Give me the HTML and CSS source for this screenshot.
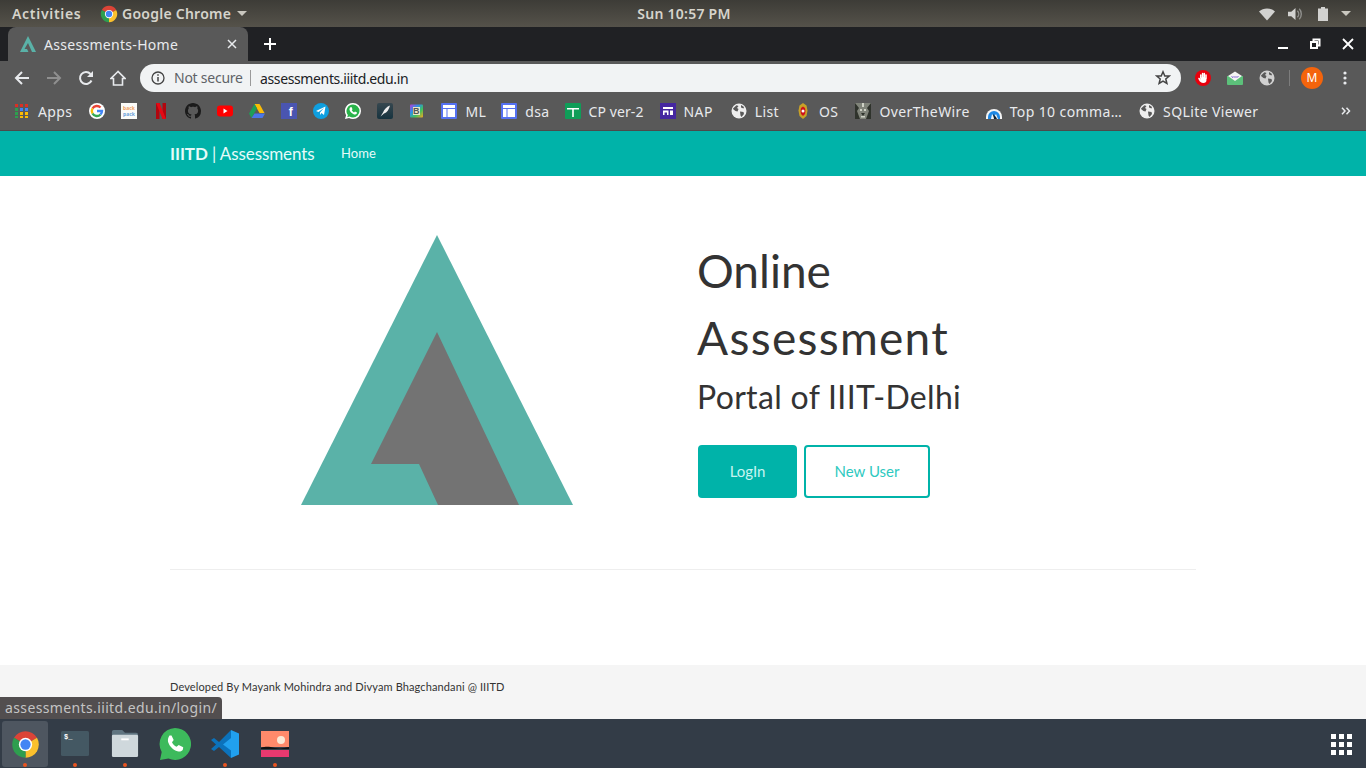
FILE: index.html
```html
<!DOCTYPE html>
<html lang="en">
<head>
    <meta charset="UTF-8">
    <meta name="viewport" content="width=device-width, initial-scale=1.0">
    <title>Assessments-Home</title>
    <link rel="stylesheet" href="styles.css">
</head>
<body>
    <svg class="defs" width="0" height="0" aria-hidden="true">
        <symbol id="chrome" viewBox="0 0 48 48">
            <path fill="#db4437" d="M24 24 43.05 13A22 22 0 0 0 4.95 13z"/>
            <path fill="#fbc02d" d="M24 24 43.05 13A22 22 0 0 1 24 46z"/>
            <path fill="#2e9e4f" d="M24 24 24 46A22 22 0 0 1 4.95 13z"/>
            <circle cx="24" cy="24" r="11" fill="#fff"/>
            <circle cx="24" cy="24" r="8.5" fill="#4285f4"/>
        </symbol>
        <symbol id="globe" viewBox="0 0 16 16">
            <circle cx="8" cy="8" r="7.5" fill="#eee"/>
            <path fill="#595959" d="M2 5.5 5.5 2.2 7.5 3 6 5 7.5 6 6.5 8.5 4.5 8 2.5 6.5zM9 8.5l3.5.5.5 2-2.5 3-1-1.5zM10 2l3 2-.5 1.500L10 4.500z"/>
        </symbol>
        <symbol id="table" viewBox="0 0 16 16">
            <rect width="16" height="16" rx="1" fill="#5571f0"/>
            <path fill="#fff" d="M2 2h12v3H2zM2 6h3.500v8H2zM6.500 6H14v8H6.500z"/>
        </symbol>
        <symbol id="logo" viewBox="0 0 272 270">
            <path fill="#5ab2a8" d="M136 0 272 270H0z"/>
            <path fill="#737373" d="M136 97 218 270H137L118 229H70z"/>
        </symbol>
    </svg>

    <div class="screen">
        <header class="topbar">
            <div class="topbar-left">
                <span class="activities">Activities</span>
                <span class="app-menu">
                    <svg class="app-icon"><use href="#chrome"/></svg>
                    Google Chrome
                    <i class="caret"></i>
                </span>
            </div>
            <div class="clock">Sun 10:57 PM</div>
            <div class="tray">
                <svg class="tray-wifi" viewBox="0 0 16 14"><path fill="#d2d2d0" d="M0 4.500C4.500.5 11.500.5 16 4.500L8 13.500z"/></svg>
                <svg class="tray-vol" viewBox="0 0 16 14"><path fill="#d2d2d0" d="M0 4.500h3.500L8 .5v13l-4.500-4H0z"/><path fill="none" stroke="#8f8f8c" stroke-width="1.500" d="M10 3.500a5 5 0 0 1 0 7M12 1.500a8 8 0 0 1 0 11"/></svg>
                <svg class="tray-batt" viewBox="0 0 10 14"><path fill="#d2d2d0" d="M3 0h4v1.500h3V14H0V1.500h3z"/></svg>
                <i class="caret"></i>
            </div>
        </header>

        <div class="tabstrip">
            <div class="tab">
                <svg class="favicon" viewBox="0 0 16 16"><path fill="#5ab2a8" d="M8 0 16 16H12L8 7 4.500 13H7L8.500 16H0z"/></svg>
                <span class="tab-title">Assessments-Home</span>
                <svg class="tab-close" viewBox="0 0 10 10"><path stroke="#e8eaed" stroke-width="1.500" d="M1 1l8 8M9 1l-8 8"/></svg>
            </div>
            <svg class="new-tab" viewBox="0 0 12 12"><path stroke="#fff" stroke-width="2" d="M6 0v12M0 6h12"/></svg>
            <div class="window-btns">
                <svg viewBox="0 0 12 12"><path stroke="#fff" stroke-width="2" d="M1 10h10"/></svg>
                <svg class="win-restore" viewBox="0 0 12 12"><path fill="none" stroke="#fff" stroke-width="2" d="M4.500 3V1.500h6v6H9M2 4h6v6H2z"/></svg>
                <svg viewBox="0 0 12 12"><path stroke="#fff" stroke-width="1.800" d="M1 1l10 10M11 1 1 11"/></svg>
            </div>
        </div>

        <div class="toolbar">
            <div class="nav-btns">
                <svg viewBox="0 0 16 16"><path fill="none" stroke="#e8eaed" stroke-width="2" d="M15 8H2M8 2 2 8l6 6"/></svg>
                <svg viewBox="0 0 16 16"><path fill="none" stroke="#8f8f8f" stroke-width="2" d="M1 8h13M8 2l6 6-6 6"/></svg>
                <svg viewBox="0 0 16 16"><path fill="none" stroke="#e8eaed" stroke-width="2" d="M13.500 10.500A6 6 0 1 1 12.500 4"/><path fill="#e8eaed" d="M15 1v6H9z"/></svg>
                <svg viewBox="0 0 16 16"><path fill="none" stroke="#e8eaed" stroke-width="1.600" d="M8 1.500 1 8.500h2.500V15h9V8.500H15z"/></svg>
            </div>
            <div class="omnibox">
                <svg class="info-icon" viewBox="0 0 14 14"><circle cx="7" cy="7" r="6" fill="none" stroke="#444" stroke-width="1.300"/><path stroke="#444" stroke-width="1.500" d="M7 6v4.500M7 3.300v1.500"/></svg>
                <span class="not-secure">Not secure</span>
                <span class="url">assessments.iiitd.edu.in</span>
                <svg class="star" viewBox="0 0 16 16"><path fill="none" stroke="#444" stroke-width="1.500" d="M8 1.800 9.800 6h4.500l-3.500 3 1.100 4.500L8 11.100l-3.900 2.400L5.200 9 1.700 6h4.500z"/></svg>
            </div>
            <div class="extensions">
                <svg viewBox="0 0 16 16">
                    <circle cx="8" cy="8" r="8" fill="#e8000d"/>
                    <g fill="none" stroke="#fff" stroke-width="1.500" stroke-linecap="round">
                        <path d="M5.800 8V5M7.600 8V3.500M9.300 8V3.500M11 8.500V5M4 8.500l1.500 2.500"/>
                    </g>
                    <ellipse cx="8.300" cy="10" rx="3.200" ry="3" fill="#fff"/>
                </svg>
                <svg viewBox="0 0 16 16"><path fill="#5cc07a" d="M0 6h16v8a1 1 0 0 1-1 1H1a1 1 0 0 1-1-1z"/><path fill="#f4f4f4" d="M1 6 8 1.500 15 6 8 11z"/><path fill="none" stroke="#7a5bd0" d="M4.500 6.500l1.500 1 1-1 1 1 1-1 1 1 1.500-1.500"/></svg>
                <svg class="ext-globe" viewBox="0 0 16 16"><use href="#globe"/></svg>
                <i class="toolbar-sep"></i>
                <span class="avatar">M</span>
                <svg class="menu-dots" viewBox="0 0 4 14"><circle cx="2" cy="2" r="1.600" fill="#e8eaed"/><circle cx="2" cy="7" r="1.600" fill="#e8eaed"/><circle cx="2" cy="12" r="1.600" fill="#e8eaed"/></svg>
            </div>
        </div>

        <div class="bookmarks">
            <span class="bm bm-apps">
                <svg viewBox="0 0 14 14">
                    <path fill="#d93025" d="M0 0h3v3H0zM5 0h3v3H5zM10 0h3v3h-3z"/>
                    <path fill="#4285f4" d="M5 4h3v3H5zM10 4h3v3h-3z"/>
                    <path fill="#2e9e4f" d="M0 4h3v3H0zM0 8h3v3H0z"/>
                    <path fill="#fbbc05" d="M5 8h3v3H5zM10 8h3v3h-3z"/>
                    <path fill="#2e9e4f" d="M0 12h3v2H0z"/><path fill="#fbbc05" d="M5 12h3v2H5zM10 12h3v2h-3z"/>
                </svg>
                Apps
            </span>
            <span class="bm">
                <svg viewBox="0 0 16 16">
                    <circle cx="8" cy="8" r="8" fill="#fff"/>
                    <path fill="none" stroke="#ea4335" stroke-width="2.400" d="M3.500 5.500A5 5 0 0 1 11.500 4.500"/>
                    <path fill="none" stroke="#fbbc05" stroke-width="2.400" d="M3.500 5.500A5 5 0 0 0 3.500 10.500"/>
                    <path fill="none" stroke="#34a853" stroke-width="2.400" d="M3.500 10.500A5 5 0 0 0 11.500 11.500"/>
                    <path fill="none" stroke="#4285f4" stroke-width="2.400" d="M11.500 11.500A5 5 0 0 0 13 8H8"/>
                </svg>
            </span>
            <span class="bm">
                <svg viewBox="0 0 16 16">
                    <rect width="16" height="16" fill="#fbfbf8"/>
                    <text class="pocket-a" x="8" y="6.500" text-anchor="middle">back</text>
                    <text class="pocket-b" x="8" y="12.500" text-anchor="middle">pack</text>
                </svg>
            </span>
            <span class="bm">
                <svg viewBox="0 0 16 16"><path fill="#b1060f" d="M3 0h3.500v16L3 16zM9.500 0H13v16H9.500z"/><path fill="#e50914" d="M3 0h3.500L13 16H9.500z"/></svg>
            </span>
            <span class="bm">
                <svg viewBox="0 0 16 16"><path fill="#1b1b1b" d="M8 0C3.580 0 0 3.580 0 8c0 3.540 2.290 6.530 5.470 7.590.4.070.55-.17.55-.38 0-.19-.01-.82-.01-1.490-2.010.37-2.530-.49-2.690-.94-.09-.23-.48-.94-.82-1.130-.28-.15-.68-.52-.01-.53.63-.01 1.080.58 1.230.82.72 1.210 1.870.87 2.330.66.070-.52.28-.87.51-1.070-1.780-.2-3.640-.89-3.640-3.950 0-.87.31-1.590.82-2.150-.08-.2-.36-1.020.08-2.120 0 0 .67-.21 2.200.82.64-.18 1.320-.27 2-.27s1.360.09 2 .27c1.530-1.040 2.200-.82 2.200-.82.44 1.100.16 1.920.08 2.120.51.56.82 1.270.82 2.150 0 3.070-1.870 3.750-3.650 3.950.29.25.54.73.54 1.480 0 1.070-.01 1.930-.01 2.200 0 .21.15.46.55.38A8.010 8.010 0 0 0 16 8c0-4.420-3.580-8-8-8z"/></svg>
            </span>
            <span class="bm">
                <svg viewBox="0 0 16 16"><rect y="2.500" width="16" height="11" rx="3" fill="#f00"/><path fill="#fff" d="M6.500 5.500 10.500 8l-4 2.500z"/></svg>
            </span>
            <span class="bm">
                <svg viewBox="0 0 16 16"><path fill="#fbbc05" d="M5.500 1h5l5 9h-5z"/><path fill="#1e9e58" d="M5.500 1 0 10.500 2.500 15l5.500-9.500z"/><path fill="#4a76e8" d="M5.500 10.500H16L13.500 15h-11z"/></svg>
            </span>
            <span class="bm">
                <svg viewBox="0 0 16 16"><rect width="16" height="16" fill="#4a55b0"/><text class="fb" x="10" y="13.400" text-anchor="middle">f</text></svg>
            </span>
            <span class="bm">
                <svg viewBox="0 0 16 16"><circle cx="8" cy="8" r="8" fill="#0f9fe0"/><path fill="#fff" d="M3 8 12.500 3.500 11 12 8.500 10 7 12V9.500L11 5 5.500 9z"/></svg>
            </span>
            <span class="bm">
                <svg viewBox="0 0 16 16"><path fill="#fff" d="M8 0a8 8 0 0 1 0 16c-1.500 0-2.800-.4-4-1L0 16l1.100-3.800A8 8 0 0 1 8 0z"/><path fill="#29b34a" d="M8 1.500a6.500 6.500 0 0 1 0 13c-1.300 0-2.500-.4-3.500-1l-2.300.7.700-2.200A6.500 6.500 0 0 1 8 1.500z"/><path fill="#fff" d="M5.500 4.200 6.500 4l1 2.200-.7 1c.5 1 1.200 1.700 2.200 2.200l1-.8 2 1-.2 1c-.5.900-1.700 1.100-2.700.8C6.800 10.600 5 8.800 4.500 6.800c-.2-1 .2-2 1-2.600z"/></svg>
            </span>
            <span class="bm">
                <svg viewBox="0 0 16 16"><defs><linearGradient id="quill" x1="0" y1="0" x2="0" y2="1"><stop offset="0" stop-color="#37474f"/><stop offset="1" stop-color="#16333f"/></linearGradient></defs><rect width="16" height="16" rx="2" fill="url(#quill)"/><path fill="#eee" d="M13 2.500C10 3.500 7 6.500 6 9.500L3.500 13.500 7 10.500C10 9.500 12 6.500 13 2.500z"/></svg>
            </span>
            <span class="bm">
                <svg viewBox="0 0 16 16"><defs><linearGradient id="rainbow" x1="0" y1="0" x2="1" y2="1"><stop offset="0" stop-color="#b63fd6"/><stop offset=".35" stop-color="#2f8fe8"/><stop offset=".65" stop-color="#3fc45a"/><stop offset="1" stop-color="#f5a623"/></linearGradient></defs><rect x="1" y="1.500" width="13" height="13" rx="1" fill="url(#rainbow)"/><rect x="4" y="4" width="7" height="8" fill="#e8e8c8"/><text class="rb" x="7.500" y="11" text-anchor="middle">B</text></svg>
            </span>
            <span class="bm bm-text bm-table"><svg viewBox="0 0 16 16"><use href="#table"/></svg>ML</span>
            <span class="bm bm-text bm-table"><svg viewBox="0 0 16 16"><use href="#table"/></svg>dsa</span>
            <span class="bm bm-text bm-tight">
                <svg viewBox="0 0 16 16"><rect width="16" height="16" rx="1" fill="#0f9d58"/><path fill="#fff" d="M2 5h12v1.500H8.800V14H7.200V6.500H2z"/></svg>
                CP ver-2
            </span>
            <span class="bm bm-text bm-nap">
                <svg viewBox="0 0 16 16"><rect width="16" height="16" fill="#4527a0"/><path fill="#fff" d="M3 4h10v2H3zM3 7.500h5.500V12H3zM10 7.500h3V12h-3z"/><path fill="#4527a0" d="M4.500 9.500h2.500V12H4.500z"/></svg>
                NAP
            </span>
            <span class="bm bm-text"><svg viewBox="0 0 16 16"><use href="#globe"/></svg>List</span>
            <span class="bm bm-text bm-os">
                <svg viewBox="0 0 16 16"><path fill="#c9a227" d="M8 0l3.500 2.500 1 5L11.500 13 8 16l-3.500-3-1-5.500 1-5z"/><path fill="#d0121b" d="M8 3.500l2 1.500.5 3L10 11l-2 2-2-2-.5-3L6 5z"/><circle cx="8" cy="8" r="1.500" fill="#fff"/></svg>
                OS
            </span>
            <span class="bm bm-text">
                <svg viewBox="0 0 16 16"><rect width="16" height="16" fill="#80847a"/><path fill="#2f332c" d="M0 0l4 5-2 3 3 8H0zM16 0l-4 5 2 3-3 8h5zM6 10h4l-2 3z"/><path fill="#cfd2c6" d="M5 6h2v2H5zM9 6h2v2H9zM7 0h2v4H7zM6 13h4v1.500H6z"/></svg>
                OverTheWire
            </span>
            <span class="bm bm-text bm-cut">
                <svg viewBox="0 0 16 16"><path fill="#f5f5f5" d="M0 16v-2a8 8 0 0 1 16 0v2z"/><path fill="#1e88e5" d="M2 16v-2a6 6 0 0 1 12 0v2h-2l-2-5-2 3-2-3-1 5z"/><path fill="#123" d="M7 11l3 3 1 2H8z"/></svg>
                Top 10 comma…
            </span>
            <span class="bm bm-text"><svg viewBox="0 0 16 16"><use href="#globe"/></svg>SQLite Viewer</span>
            <svg class="bm-more" viewBox="0 0 10 8"><path fill="none" stroke="#e8eaed" stroke-width="1.500" d="M1 .8 4 4 1 7.200M5.500.8 8.500 4l-3 3.200"/></svg>
        </div>

        <nav class="navbar">
            <div class="container nav-inner">
                <a class="brand"><b>IIITD</b> | Assessments</a>
                <a class="nav-link">Home</a>
            </div>
        </nav>

        <main class="container content">
            <section class="hero">
                <div class="hero-logo">
                    <svg class="logo"><use href="#logo"/></svg>
                </div>
                <div class="hero-text">
                    <h1>Online<br><span class="wide">Assessment</span></h1>
                    <h2>Portal of IIIT-Delhi</h2>
                    <div class="hero-btns">
                        <a class="btn btn-fill">LogIn</a>
                        <a class="btn btn-line">New User</a>
                    </div>
                </div>
            </section>
            <hr class="rule">
        </main>

        <footer class="page-footer">
            <div class="container">Developed By Mayank Mohindra and Divyam Bhagchandani @ IIITD</div>
        </footer>

        <aside class="dock">
            <div class="dock-item dock-active">
                <svg class="dock-chrome"><use href="#chrome"/></svg>
                <i class="dock-dot"></i>
            </div>
            <div class="dock-item">
                <svg viewBox="0 0 28 28" class="dock-icon"><rect y="1" width="28" height="25" rx="1.500" fill="#445863"/><text class="term" x="3" y="9">$_</text></svg>
                <i class="dock-dot"></i>
            </div>
            <div class="dock-item">
                <svg viewBox="0 0 28 30" class="dock-icon"><path fill="#5f7480" d="M0 2a2 2 0 0 1 2-2h9l3 3h12a2 2 0 0 1 2 2v8H0z"/><rect y="5" width="28" height="24" rx="1.500" fill="#cfd8dc"/><rect x="10" y="9" width="8" height="2" fill="#fff"/></svg>
                <i class="dock-dot"></i>
            </div>
            <div class="dock-item">
                <svg viewBox="0 0 32 32" class="dock-wa"><path fill="#3dba5c" d="M16 0a16 16 0 1 1-6.500 30.600L1 32l1.700-8A16 16 0 0 1 16 0z"/><path fill="#fff" d="M10.500 7.500h2l2.200 4.500-1.700 2.300c1 2 2.500 3.500 4.500 4.500l2.200-1.800 4.500 2.300-.3 2.200c-1 1.900-3.400 2.500-5.400 1.700-4.400-1.300-8-4.900-9.400-9.300-.5-2.200.1-4.500 1.400-6.400z"/></svg>
            </div>
            <div class="dock-item">
                <svg viewBox="0 0 28 28" class="dock-icon"><path fill="#0b72bb" d="M20 0 8 12 3 8 0 10l5 4.500L0 19l3 2 5-4 12 11z"/><path fill="#21a0ee" d="M20 0l8 3.500v21L20 28zM20 8l-8 6.500 8 6z"/></svg>
                <i class="dock-dot"></i>
            </div>
            <div class="dock-item">
                <svg viewBox="0 0 28 26" class="dock-icon"><rect width="28" height="16" fill="#ff8a6b"/><circle cx="20" cy="9" r="4" fill="#fbe9d6"/><path fill="#111" d="M0 17c6-2 8-1 14 0s9 0 14-1v2H0z"/><path fill="#e8396f" d="M0 19h28v7H0z"/></svg>
                <i class="dock-dot"></i>
            </div>
            <svg class="dock-grid" viewBox="0 0 21 21">
                <g fill="#fff">
                    <rect width="5" height="5"/><rect x="8" width="5" height="5"/><rect x="16" width="5" height="5"/>
                    <rect y="8" width="5" height="5"/><rect x="8" y="8" width="5" height="5"/><rect x="16" y="8" width="5" height="5"/>
                    <rect y="16" width="5" height="5"/><rect x="8" y="16" width="5" height="5"/><rect x="16" y="16" width="5" height="5"/>
                </g>
            </svg>
        </aside>

        <div class="status-bubble">assessments.iiitd.edu.in/login/</div>
    </div>
</body>
</html>
```

FILE: styles.css
```css
* {
    box-sizing: border-box;
}
html, body {
    margin: 0;
    height: 100%;
}
body {
    font-family: 'Noto Sans', sans-serif;
    background-color: #fff;
    overflow: hidden;
}
.defs {
    display: block;
    height: 0;
}
.screen {
    position: relative;
    display: flex;
    flex-direction: column;
    width: 1366px;
    height: 768px;
    overflow: hidden;
}

/* desktop top bar */
.topbar {
    display: grid;
    grid-template-columns: 1fr auto 1fr;
    align-items: center;
    height: 27px;
    padding: 0 12px;
    background: linear-gradient(#3d3c37, #55524a);
    color: #d6d4cc;
    font-size: 14px;
    font-weight: 600;
    letter-spacing: .25px;
}
.topbar-left {
    display: flex;
    align-items: center;
}
.activities {
    width: 88px;
    letter-spacing: .7px;
}
.app-menu {
    display: flex;
    align-items: center;
}
.app-icon {
    width: 18px;
    height: 18px;
    margin-right: 4px;
}
.caret {
    display: block;
    width: 0;
    height: 0;
    border: 5px solid transparent;
    border-top: 5px solid #c9c7bf;
    border-bottom: 0;
}
.app-menu .caret {
    margin-left: 6px;
}
.clock {
    padding-left: 2px;
}
.tray {
    display: flex;
    align-items: center;
    justify-content: flex-end;
    padding-right: 3px;
}
.tray-wifi {
    width: 16px;
    height: 14px;
    margin-right: 13px;
}
.tray-vol {
    width: 15px;
    height: 14px;
    margin-right: 15px;
}
.tray-batt {
    width: 10px;
    height: 14px;
    margin-right: 13px;
}

/* tab strip */
.tabstrip {
    display: flex;
    align-items: center;
    height: 34px;
    padding-left: 8px;
    background-color: #202124;
}
.tab {
    display: flex;
    align-items: center;
    align-self: flex-end;
    width: 240px;
    height: 34px;
    padding: 0 12px;
    background-color: #595959;
    border-radius: 8px 8px 0 0;
    color: #e8eaed;
    font-size: 14px;
    letter-spacing: .3px;
}
.favicon {
    width: 16px;
    height: 16px;
    margin-right: 8px;
}
.tab-title {
    flex-grow: 1;
}
.tab-close {
    width: 10px;
    height: 10px;
    margin-right: -1px;
}
.new-tab {
    width: 12px;
    height: 12px;
    margin-left: 16px;
}
.window-btns {
    display: flex;
    gap: 20px;
    margin-left: auto;
    padding-right: 12px;
}
.window-btns svg {
    width: 12px;
    height: 12px;
}
.window-btns .win-restore {
    margin-right: 1px;
}

/* address bar */
.toolbar {
    display: flex;
    align-items: center;
    height: 33px;
    padding: 0 14px;
    background-color: #595959;
}
.nav-btns {
    display: flex;
    flex-shrink: 0;
    gap: 16px;
    width: 126px;
}
.nav-btns svg {
    width: 16px;
    height: 16px;
}
.omnibox {
    display: flex;
    flex-shrink: 0;
    align-items: center;
    width: 1041px;
    height: 28px;
    margin-top: 1px;
    padding: 0 10px 0 11px;
    background-color: #f1f3f4;
    border-radius: 14px;
    font-size: 14px;
}
.info-icon {
    width: 14px;
    height: 14px;
    margin-right: 9px;
}
.not-secure {
    width: 77px;
    color: #5f6368;
    border-right: 1px solid #9a9a9a;
    letter-spacing: -.25px;
    line-height: 16px;
}
.url {
    flex-grow: 1;
    margin-left: 9px;
    color: #202124;
    letter-spacing: -.37px;
}
.star {
    width: 16px;
    height: 16px;
}
.extensions {
    display: flex;
    align-items: center;
    margin-left: 14px;
}
.extensions > svg {
    width: 16px;
    height: 16px;
    margin-right: 16px;
}
.extensions > svg.ext-globe {
    opacity: .8;
    margin-right: 14px;
}
.extensions > svg.menu-dots {
    width: 4px;
    height: 14px;
    margin: 0 0 0 20px;
}
.toolbar-sep {
    width: 1px;
    height: 16px;
    background-color: #7d7d7d;
}
.avatar {
    display: flex;
    flex-shrink: 0;
    align-items: center;
    justify-content: center;
    width: 22px;
    height: 22px;
    margin-left: 11px;
    background-color: #f4640c;
    border-radius: 50%;
    color: #fff;
    font-size: 12px;
}

/* bookmarks */
.bookmarks {
    display: flex;
    align-items: center;
    gap: 16px;
    height: 37px;
    padding: 0 16px 2px 15px;
    background-color: #595959;
    border-bottom: 1px solid #4b4b4b;
    color: #e8eaed;
    font-size: 14px;
    letter-spacing: .38px;
}
.bm {
    display: flex;
    align-items: center;
    gap: 9px;
}
.bm svg {
    flex-shrink: 0;
    width: 16px;
    height: 16px;
}
.bm-apps {
    margin-right: 1px;
}
.bm-apps svg {
    width: 14px;
    height: 14px;
}
.bm-text {
    gap: 8px;
}
.bm-table {
    margin-right: -1px;
}
.bm-tight {
    letter-spacing: .1px;
}
.bm-nap {
    margin-right: 2px;
}
.bm-os, .bm-cut {
    margin-right: 1px;
}
.bm-more {
    width: 10px;
    height: 8px;
    margin-left: auto;
    margin-right: -1px;
}
.pocket-a, .pocket-b {
    font-family: 'Noto Sans', sans-serif;
    font-size: 5px;
    font-weight: 700;
    letter-spacing: 0;
}
.pocket-a {
    fill: #f0a060;
}
.pocket-b {
    fill: #6a9fd8;
}
.fb {
    font-family: 'Liberation Sans', sans-serif;
    font-size: 12px;
    font-weight: 700;
    fill: #fff;
}
.rb {
    font-family: 'Liberation Sans', sans-serif;
    font-size: 9px;
    font-weight: 700;
    fill: #555;
}
.term {
    font-family: 'Liberation Mono', monospace;
    font-size: 7px;
    font-weight: 700;
    fill: #fff;
}

/* page */
.container {
    width: 1026px;
    margin: 0 auto;
}
.navbar {
    height: 45px;
    flex-shrink: 0;
    background-color: #00b3a9;
    color: #fff;
}
.nav-inner {
    display: flex;
    align-items: center;
    height: 45px;
    padding-bottom: 1px;
}
.brand {
    width: 171px;
    font-family: 'Lato', sans-serif;
    font-size: 17px;
    color: #e6fbf9;
    letter-spacing: -.1px;
}
.brand b {
    font-weight: 700;
}
.nav-link {
    font-family: 'Lato', sans-serif;
    font-size: 13px;
    color: #e6fbf9;
    letter-spacing: .1px;
}
.content {
    flex-grow: 1;
    min-height: 0;
}
.hero {
    display: flex;
    height: 393px;
    padding-top: 59px;
}
.hero-logo {
    width: 527px;
    padding-left: 131px;
}
.logo {
    display: block;
    width: 272px;
    height: 270px;
}
.hero-text {
    color: #333;
    font-family: 'Lato', sans-serif;
}
.hero-text h1 {
    margin: 2px 0 0;
    font-size: 46px;
    font-weight: 400;
    line-height: 67px;
}
.wide {
    letter-spacing: 1.3px;
}
.hero-text h2 {
    margin: 4px 0 0;
    font-size: 32px;
    font-weight: 400;
    letter-spacing: .32px;
    line-height: 44px;
}
.hero-btns {
    display: flex;
    gap: 7px;
    margin: 26px 0 0 1px;
}
.btn {
    display: flex;
    align-items: center;
    justify-content: center;
    height: 53px;
    padding-bottom: 2px;
    border: 2px solid #00b3a9;
    border-radius: 4px;
    font-size: 15px;
}
.btn-fill {
    width: 99px;
    background-color: #00b3a9;
    color: #c8f5f1;
}
.btn-line {
    width: 126px;
    background-color: #fff;
    color: #2ec9c0;
}
.rule {
    height: 1px;
    margin: 0;
    border: 0;
    background-color: #eee;
}
.page-footer {
    height: 54px;
    flex-shrink: 0;
    padding-top: 15px;
    background-color: #f5f5f5;
    color: #333;
    font-family: 'Lato', sans-serif;
    font-size: 11px;
    letter-spacing: .12px;
}

/* dock */
.dock {
    display: flex;
    align-items: flex-end;
    gap: 4px;
    height: 49px;
    flex-shrink: 0;
    padding: 0 0 1px 2px;
    background-color: #333c47;
}
.dock-item {
    position: relative;
    display: flex;
    align-items: center;
    justify-content: center;
    width: 46px;
    height: 46px;
}
.dock-active {
    background-color: #4e5660;
    border-radius: 3px;
}
.dock-chrome {
    width: 29px;
    height: 29px;
}
.dock-icon {
    width: 28px;
    height: 28px;
}
.dock-wa {
    width: 32px;
    height: 32px;
}
.dock-dot {
    position: absolute;
    bottom: 0;
    left: 21px;
    width: 4px;
    height: 4px;
    background-color: #e95420;
    border-radius: 50%;
}
.dock-grid {
    width: 21px;
    height: 21px;
    margin: 0 14px 12px auto;
}
.status-bubble {
    position: absolute;
    left: 0;
    bottom: 49px;
    width: 222px;
    height: 22px;
    padding-left: 5px;
    background-color: #524e4f;
    border-radius: 0 4px 0 0;
    color: #c4c4c4;
    font-size: 14px;
    letter-spacing: .37px;
    line-height: 22px;
    white-space: nowrap;
}
```
